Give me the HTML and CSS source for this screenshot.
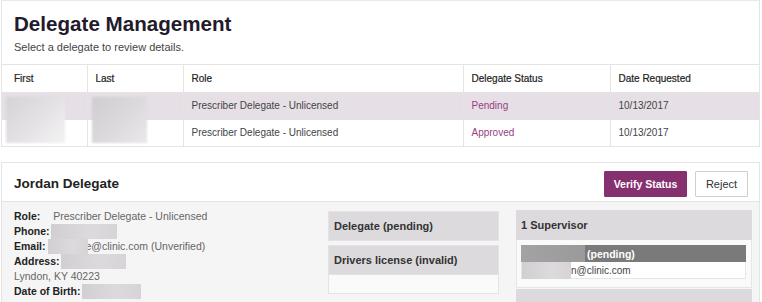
FILE: index.html
```html
<!DOCTYPE html>
<html>
<head>
<meta charset="utf-8">
<link rel="stylesheet" href="styles.css">
</head>
<body>
<div class="page">
  <section class="card list-card">
    <div class="list-head">
      <h1 class="title">Delegate Management</h1>
      <p class="subtitle">Select a delegate to review details.</p>
    </div>
    <table class="grid">
      <colgroup>
        <col class="c1"><col class="c2"><col class="c3"><col class="c4"><col class="c5">
      </colgroup>
      <thead>
        <tr><th>First</th><th>Last</th><th>Role</th><th>Delegate Status</th><th>Date Requested</th></tr>
      </thead>
      <tbody>
        <tr class="selected">
          <td class="redact-cell"><span class="redact redact-first"></span></td>
          <td class="redact-cell"><span class="redact redact-last"></span></td>
          <td>Prescriber Delegate - Unlicensed</td>
          <td class="status">Pending</td>
          <td>10/13/2017</td>
        </tr>
        <tr>
          <td></td>
          <td></td>
          <td>Prescriber Delegate - Unlicensed</td>
          <td class="status">Approved</td>
          <td>10/13/2017</td>
        </tr>
      </tbody>
    </table>
  </section>

  <section class="card detail-card">
    <div class="detail-head">
      <h2 class="name">Jordan Delegate</h2>
      <div class="actions">
        <button class="btn btn-primary">Verify Status</button>
        <button class="btn btn-default">Reject</button>
      </div>
    </div>
    <div class="detail-body">
      <div class="info">
        <div class="line"><b>Role:</b><span class="val role-val">Prescriber Delegate - Unlicensed</span></div>
        <div class="line"><b>Phone:</b><span class="blur blur-phone"></span></div>
        <div class="line"><b>Email:</b><span class="blur blur-email"></span><span class="val">e@clinic.com (Unverified)</span></div>
        <div class="line"><b>Address:</b><span class="blur blur-address"></span></div>
        <div class="line"><span class="val">Lyndon, KY 40223</span></div>
        <div class="line"><b>Date of Birth:</b><span class="blur blur-dob"></span></div>
      </div>
      <div class="checks">
        <div class="check-item solo">Delegate (pending)</div>
        <div class="check-group">
          <div class="check-item">Drivers license (invalid)</div>
          <div class="check-body"></div>
        </div>
      </div>
      <div class="supervisors">
        <div class="sup-panel">
          <div class="sup-head">1 Supervisor</div>
          <div class="sup-body">
            <div class="sup-name"><span class="blur-dark"></span><span>(pending)</span></div>
            <div class="sup-email"><span class="blur blur-semail"></span><span>n@clinic.com</span></div>
          </div>
        </div>
        <div class="sup-next"></div>
      </div>
    </div>
  </section>
</div>
</body>
</html>
```

FILE: styles.css
```css
* { box-sizing: border-box; }
html, body { margin: 0; padding: 0; background: #ffffff; }
body {
  font-family: "Liberation Sans", Arial, sans-serif;
  color: #222;
  width: 762px;
  height: 302px;
  overflow: hidden;
}
.page {
  padding: 0 2px 0 1px;
}
.card {
  border: 1px solid #e4e4e4;
  background: #fff;
}
.list-card { border-top-color: #e9e9e9; }

.list-head {
  padding: 11px 12px 10px 12px;
  border-bottom: 1px solid #e4e4e4;
}
.title {
  margin: 0;
  font-size: 20.6px;
  line-height: 24px;
  font-weight: bold;
  color: #231a2c;
}
.subtitle {
  margin: 4px 0 0;
  font-size: 11px;
  line-height: 14px;
  color: #444;
}

.grid {
  width: 100%;
  border-collapse: collapse;
  table-layout: fixed;
  font-size: 10px;
}
.c1 { width: 85px; }
.c2 { width: 96px; }
.c3 { width: 280px; }
.c4 { width: 147px; }
.grid th, .grid td {
  text-align: left;
  padding: 0 0 0 8px;
  height: 27px;
  border-left: 1px solid #e4e4e4;
  border-bottom: 1px solid #e4e4e4;
  white-space: nowrap;
}
.grid th:first-child, .grid td:first-child { border-left: none; padding-left: 12px; }
.grid tbody tr:last-child td { border-bottom: none; }
.grid th {
  font-weight: normal;
  color: #222;
  -webkit-text-stroke: 0.2px #222;
}
.grid td { color: #444; }
.grid tr.selected td { background: #e6dfe6; border-bottom-color: #e6dfe6; }
.grid td.status { color: #98407f; }
.redact-cell { position: relative; }
.redact {
  position: absolute;
  top: 4px;
  height: 46px;
  filter: blur(1px);
}
.redact-first {
  left: 4px;
  width: 59px;
  background: linear-gradient(135deg, #d6d3d6 0%, #e2dfe2 45%, #f4f3f4 100%);
}
.redact-last {
  left: 4px;
  width: 55px;
  background: linear-gradient(135deg, #d0cdd0 0%, #dcd9dc 50%, #eae8ea 100%);
}

.detail-card {
  margin-top: 15px;
  border-bottom: none;
}
.detail-head {
  height: 39px;
  border-bottom: 1px solid #e4e4e4;
  display: flex;
  align-items: center;
  justify-content: space-between;
  padding: 0 11px 0 12px;
}
.name {
  margin: 0;
  font-size: 13.5px;
  font-weight: bold;
  color: #222;
  padding-top: 3px;
}
.actions {
  display: flex;
  gap: 8px;
  padding-top: 3px;
}
.btn {
  font-family: "Liberation Sans", Arial, sans-serif;
  height: 26px;
  font-size: 10.5px;
  border-radius: 1px;
  cursor: pointer;
  padding: 0;
}
.btn-primary {
  width: 83px;
  background: #85306f;
  color: #fff;
  border: 1px solid #85306f;
  font-weight: bold;
}
.btn-default {
  width: 53px;
  background: #fff;
  color: #333;
  border: 1px solid #cfcfcf;
  font-size: 11px;
}

.detail-body {
  background: #f5f5f5;
  display: grid;
  grid-template-columns: 314px 171px 1fr;
  padding: 8px 7px 0 12px;
  height: 110px;
}
.info {
  font-size: 10.5px;
  line-height: 15px;
  color: #222;
  margin-top: -1px;
}
.line { display: flex; align-items: center; height: 15px; white-space: nowrap; }
.line b { font-weight: bold; color: #222; }
.val { color: #666; }
.role-val { margin-left: 13px; }
.blur {
  display: inline-block;
  height: 15px;
  background: linear-gradient(90deg, #d2cfd2, #dcdadc 60%, #d6d4d6);
  filter: blur(0.4px);
}
.blur-phone { width: 66px; margin-left: 1px; }
.blur-email { width: 40px; margin-left: 2px; margin-right: -2px; }
.blur-address { width: 65px; margin-left: 1px; }
.blur-dob { width: 59px; margin-left: 1px; }

.checks {
  padding-top: 1px;
}
.check-item {
  background: #dcdadc;
  font-size: 11px;
  font-weight: bold;
  color: #333;
  height: 30px;
  line-height: 28px;
  padding-left: 5px;
  border: 1px solid #e4e2e4;
}
.check-item.solo { margin-bottom: 4px; }
.check-body {
  height: 19px;
  background: #fafafa;
  border: 1px solid #e4e4e4;
  border-top: none;
}

.supervisors {
  margin-left: 17px;
}
.sup-head {
  background: #dcdadc;
  height: 30px;
  line-height: 30px;
  padding-left: 5px;
  font-size: 11px;
  font-weight: bold;
  color: #333;
}
.sup-body {
  background: #fafafa;
  border: 1px solid #e6e6e6;
  border-top: none;
  padding: 5px 5px 8px 4px;
  height: 48px;
}
.sup-name {
  background: #7a7a7a;
  height: 17px;
  display: flex;
  align-items: center;
  color: #fff;
  font-size: 10.5px;
  font-weight: bold;
}
.blur-dark {
  width: 64px;
  height: 17px;
  background: linear-gradient(90deg, #a3a3a3, #9a9a9a);
  margin-right: 2px;
}
.sup-email {
  background: #fff;
  border: 1px solid #e6e6e6;
  border-top: none;
  height: 17px;
  display: flex;
  align-items: center;
  font-size: 10px;
  color: #444;
}
.blur-semail { width: 49px; height: 17px; margin-top: 1px; }
.sup-next {
  margin-top: 1px;
  height: 20px;
  background: #dcdadc;
}
```
